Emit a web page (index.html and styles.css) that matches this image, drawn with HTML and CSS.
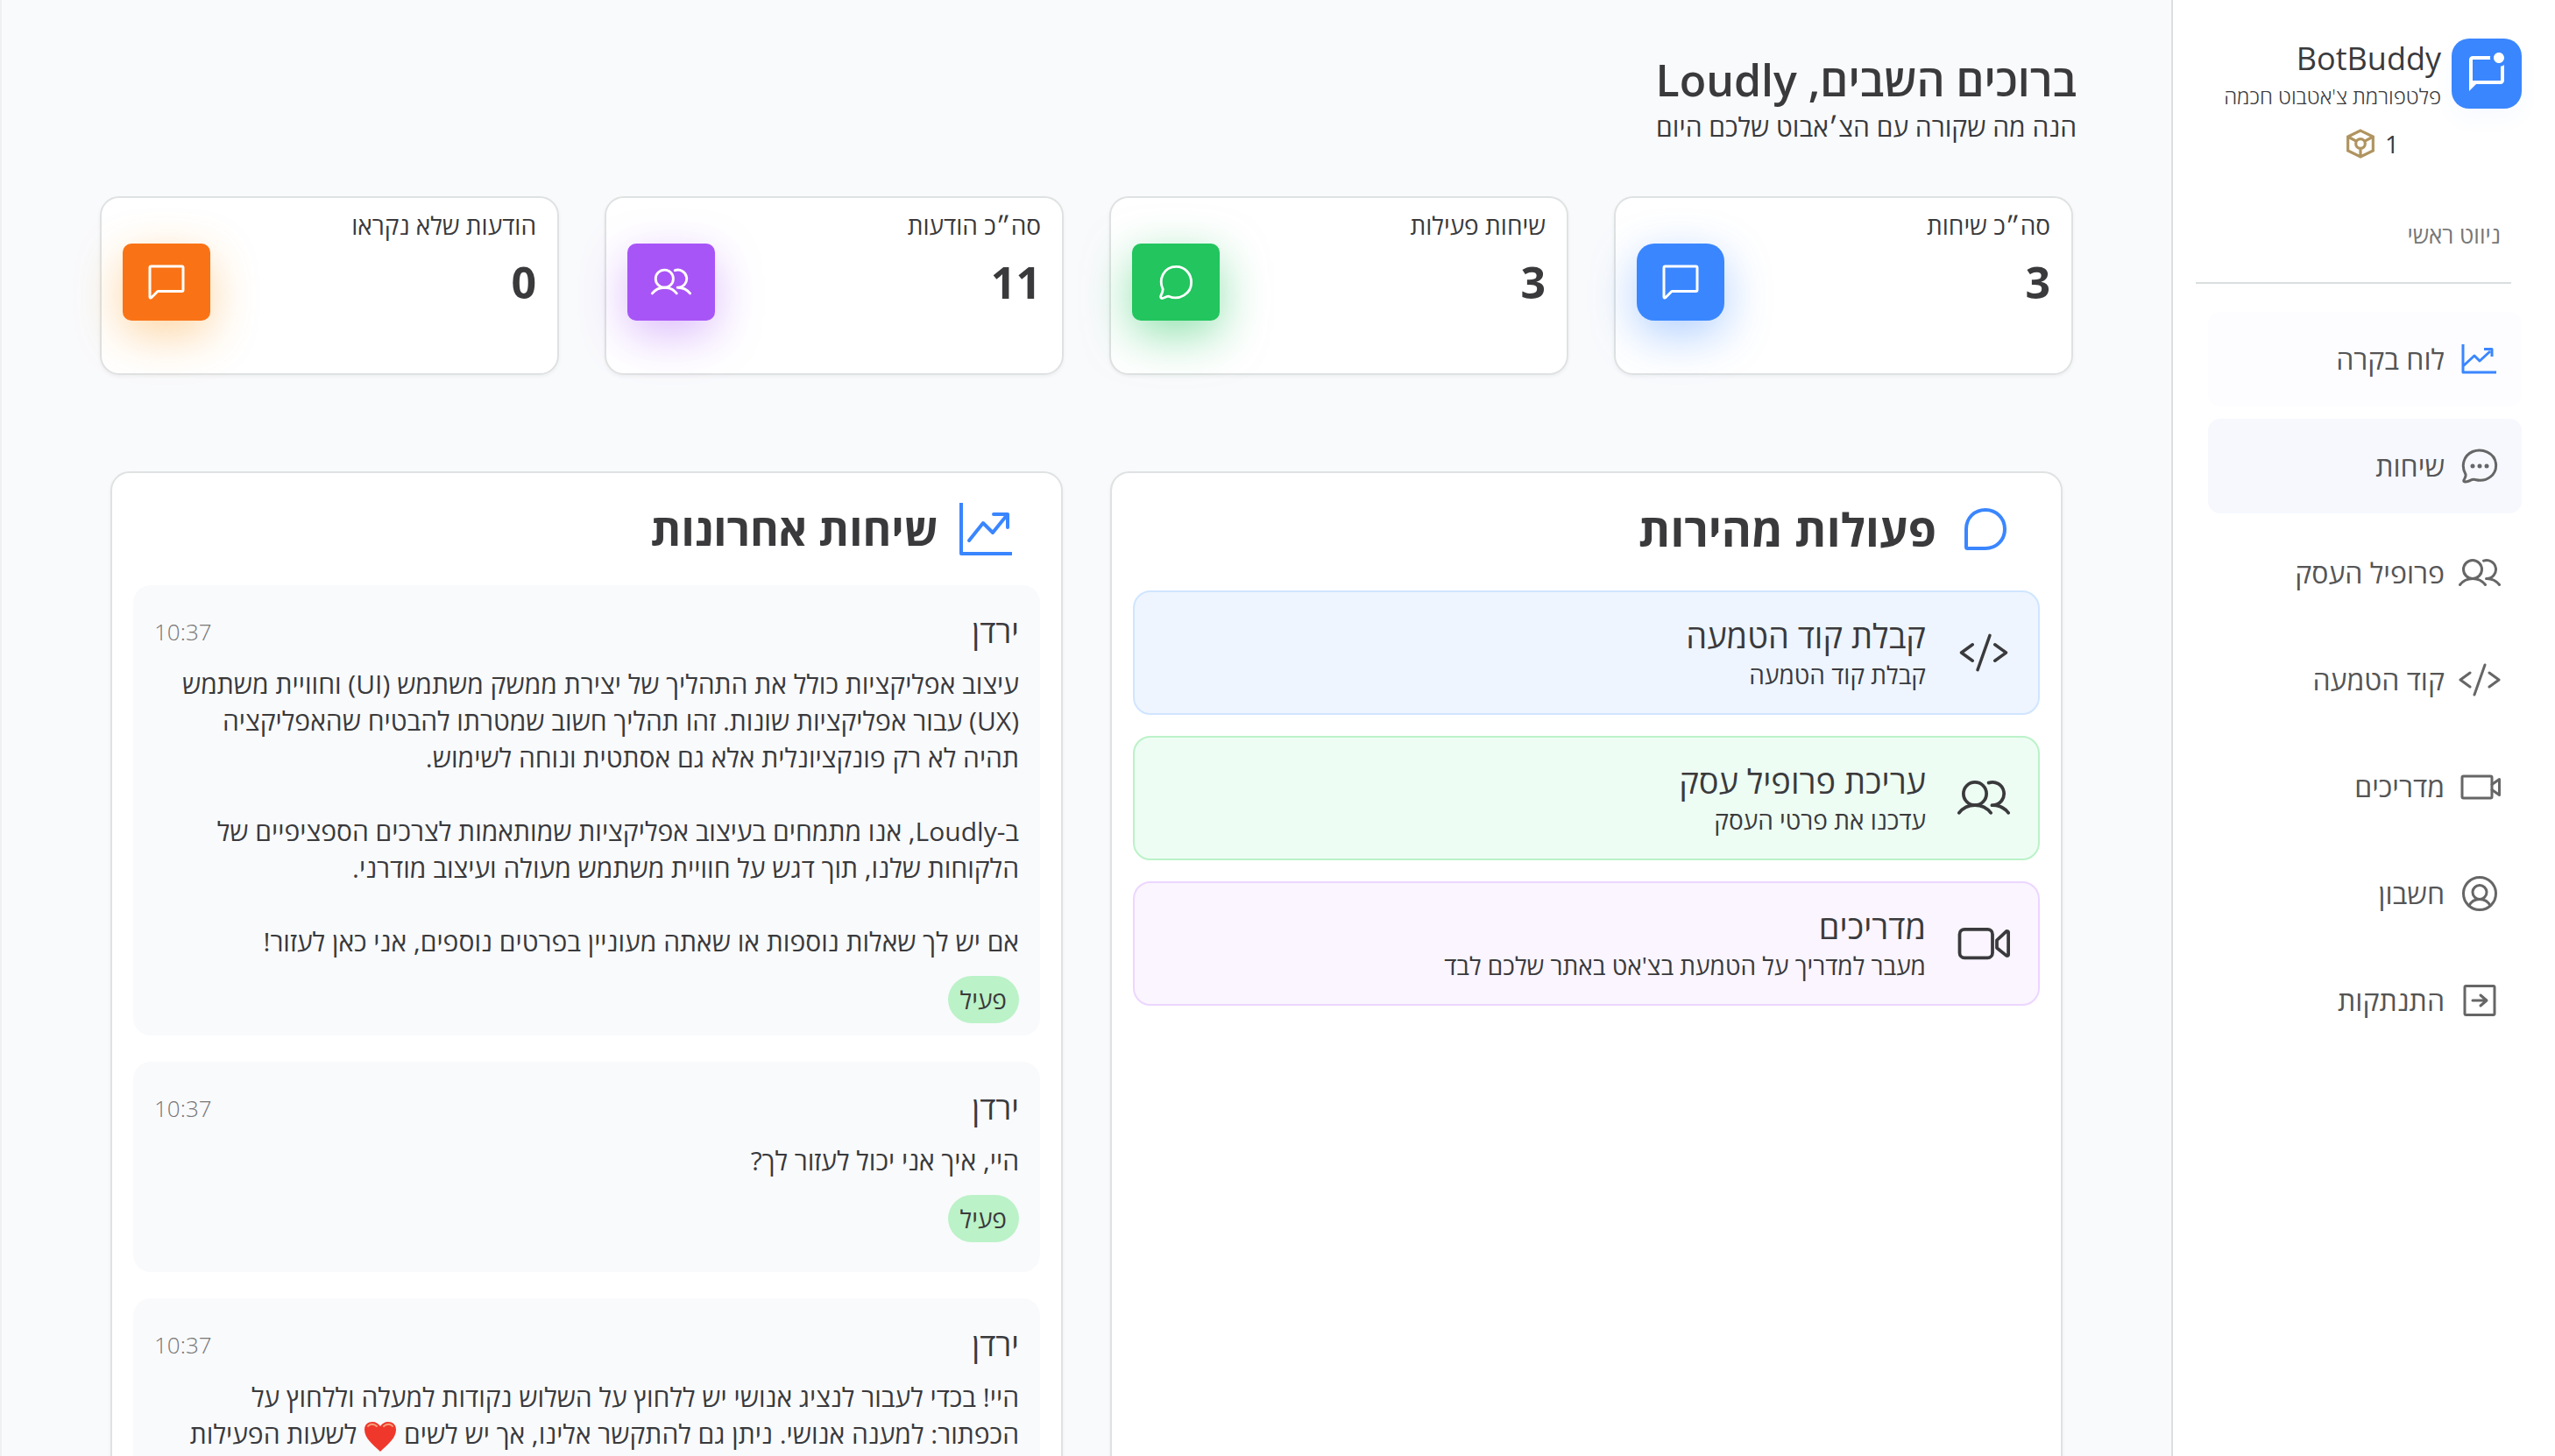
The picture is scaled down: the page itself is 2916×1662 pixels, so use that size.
FILE: index.html
```html
<!DOCTYPE html>
<html lang="he" dir="rtl">
<head>
<meta charset="UTF-8">
<title>BotBuddy</title>
<link rel="stylesheet" href="styles.css">
</head>
<body>

<!-- icons used more than once -->
<svg width="0" height="0" class="sprite">
	<symbol id="users" viewBox="0 0 48 32">
		<circle cx="16" cy="12" r="10.5"/>
		<path d="M1.5 29.5C5 25 10 22.500 16 22.500S27 25 30.500 29.500M28.500 2.100A10.500 10.500 0 1 1 32 22.500H31.500M32 22.500C38 22.500 43 25 46.500 29.500"/>
	</symbol>
	<symbol id="code" viewBox="0 0 48 38">
		<path d="M13 11L2 19l11 8M35 11l11 8-11 8M30 2L18 36"/>
	</symbol>
	<symbol id="chat-square" viewBox="0 0 42 40">
		<path d="M2 37V3.500A1.500 1.500 0 0 1 3.500 2h35A1.500 1.500 0 0 1 40 3.500V29a1.500 1.500 0 0 1-1.500 1.500H11L4 37.500C3 38.500 2 38 2 37Z"/>
	</symbol>
</svg>

<div class="layout">

	<aside class="sidebar">
		<div class="brand">
			<div class="logo">
				<svg viewBox="0 0 24 24"><path fill="#fff" d="M22 6.980V16c0 1.100-.9 2-2 2H6l-4 4V4c0-1.100.9-2 2-2h10.100c-.06.320-.1.660-.1 1s.04.680.1 1H4v12h16V7.900c.74-.15 1.420-.48 2-.92zM16 3c0 1.660 1.340 3 3 3s3-1.340 3-3-1.340-3-3-3-3 1.340-3 3z"/></svg>
			</div>
			<div class="brand-text">
				<span class="brand-name">BotBuddy</span>
				<span class="brand-sub">פלטפורמת צ'אטבוט חכמה</span>
			</div>
		</div>
		<div class="credits">
			<span>1</span>
			<svg viewBox="0 0 30 32"><g fill="none" stroke="#b09460" stroke-width="3"><path d="M15 2L28.500 8.500V23.500L15 30L1.500 23.500V8.500ZM1.500 8.500L10 13M28.500 8.500L20 13M15 22V30"/><circle cx="15" cy="16" r="5"/></g></svg>
		</div>

		<h2 class="nav-title">ניווט ראשי</h2>

		<nav>
			<a href="#" class="nav-item active">
				<svg class="icon" viewBox="0 0 48 40"><path stroke-linecap="butt" d="M5 3V35H43M5 28L18 16l6 6L36 11M29 8.500H38V17"/></svg>
				לוח בקרה
			</a>
			<a href="#" class="nav-item hover">
				<svg class="icon" viewBox="0 0 48 40"><path d="M8 29.500C2.500 20 5.500 8 16 3.500C27 -1 41 5 42.500 17C44 30 32 39 19 35.500C16 34.500 15 35.500 12 37C8 38.500 5 38.500 6 36C7.500 33 8.500 32 8 29.500Z"/><g class="dots"><circle cx="16" cy="20" r="2.500"/><circle cx="24" cy="20" r="2.500"/><circle cx="32" cy="20" r="2.500"/></g></svg>
				שיחות
			</a>
			<a href="#" class="nav-item">
				<svg class="icon"><use href="#users"/></svg>
				פרופיל העסק
			</a>
			<a href="#" class="nav-item">
				<svg class="icon"><use href="#code"/></svg>
				קוד הטמעה
			</a>
			<a href="#" class="nav-item">
				<svg class="icon" viewBox="0 0 48 40"><rect x="4" y="8" width="34" height="25" rx="1.500"/><path d="M38 17.500L46.500 11.500V29.500L38 23.500"/></svg>
				מדריכים
			</a>
			<a href="#" class="nav-item">
				<svg class="icon" viewBox="0 0 48 40"><circle cx="24" cy="20" r="18.500"/><circle cx="24" cy="18.500" r="8"/><path d="M12 34C14 29.500 18.500 26.500 24 26.500S34 29.500 36 34"/></svg>
				חשבון
			</a>
			<a href="#" class="nav-item">
				<svg class="icon" viewBox="0 0 48 40"><rect x="7" y="3.500" width="34" height="33" rx="1.500"/><path d="M16 20H32M25 14L32 20L25 26"/></svg>
				התנתקות
			</a>
		</nav>
	</aside>

	<main class="content">
		<header class="welcome">
			<h1>ברוכים השבים, Loudly</h1>
			<p>הנה מה שקורה עם הצ׳אבוט שלכם היום</p>
		</header>

		<section class="stats">
			<div class="stat">
				<div>
					<p class="stat-label">סה״כ שיחות</p>
					<p class="stat-value">3</p>
				</div>
				<div class="stat-icon blue"><svg class="icon"><use href="#chat-square"/></svg></div>
			</div>
			<div class="stat">
				<div>
					<p class="stat-label">שיחות פעילות</p>
					<p class="stat-value">3</p>
				</div>
				<div class="stat-icon green"><svg class="icon" viewBox="0 0 40 42"><path d="M4.500 29.500C-1 18 5 2.500 20.500 2.500C31 2.500 38.500 11 38.500 21.500C38.500 35 24 43.500 11.500 38C9 38 6 40 3.500 40.500C2 40.500 1.500 39 2 37.500C3.500 34.500 4.500 32 4.500 29.500Z"/></svg></div>
			</div>
			<div class="stat">
				<div>
					<p class="stat-label">סה״כ הודעות</p>
					<p class="stat-value">11</p>
				</div>
				<div class="stat-icon purple"><svg class="icon"><use href="#users"/></svg></div>
			</div>
			<div class="stat">
				<div>
					<p class="stat-label">הודעות שלא נקראו</p>
					<p class="stat-value">0</p>
				</div>
				<div class="stat-icon orange"><svg class="icon"><use href="#chat-square"/></svg></div>
			</div>
		</section>

		<section class="panels">
			<div class="panel">
				<h2 class="panel-title">
					<svg class="icon bubble" viewBox="0 0 48 48"><path d="M2 24C2 11 11.500 2 24 2S46 11.500 46 24S36.500 46 24 46H3.500A1.500 1.500 0 0 1 2 44.500Z"/></svg>
					פעולות מהירות
				</h2>
				<div class="actions">
					<button type="button" class="action blue">
						<svg class="icon"><use href="#code"/></svg>
						<span>
							<span class="action-name">קבלת קוד הטמעה</span>
							<span class="action-sub">קבלת קוד הטמעה</span>
						</span>
					</button>
					<button type="button" class="action green">
						<svg class="icon"><use href="#users"/></svg>
						<span>
							<span class="action-name">עריכת פרופיל עסק</span>
							<span class="action-sub">עדכנו את פרטי העסק</span>
						</span>
					</button>
					<button type="button" class="action purple">
						<svg class="icon" viewBox="0 0 48 32"><rect x="2" y="3" width="30" height="26" rx="4.500"/><path d="M36 13L44 5.500C45 4.500 46.500 4.500 46.500 6V26C46.500 27.500 45 27.500 44 26.500L36 20Z"/></svg>
						<span>
							<span class="action-name">מדריכים</span>
							<span class="action-sub">מעבר למדריך על הטמעת בצ'אט באתר שלכם לבד</span>
						</span>
					</button>
				</div>
			</div>

			<div class="panel">
				<h2 class="panel-title recent">
					<svg class="icon graph" viewBox="0 0 60 60"><path d="M2 0V58H60" stroke-linecap="butt"/><path d="M11 43L27 23L38 34L55 13M39 13H55V28"/></svg>
					שיחות אחרונות
				</h2>
				<div class="messages">
					<article class="message">
						<div class="message-head">
							<h3>ירדן</h3>
							<time>10:37</time>
						</div>
						<p>עיצוב אפליקציות כולל את התהליך של יצירת ממשק משתמש (UI) וחוויית משתמש<br>(UX) עבור אפליקציות שונות. זהו תהליך חשוב שמטרתו להבטיח שהאפליקציה<br>תהיה לא רק פונקציונלית אלא גם אסתטית ונוחה לשימוש.<br><br>ב-Loudly, אנו מתמחים בעיצוב אפליקציות שמותאמות לצרכים הספציפיים של<br>הלקוחות שלנו, תוך דגש על חוויית משתמש מעולה ועיצוב מודרני.<br><br>אם יש לך שאלות נוספות או שאתה מעוניין בפרטים נוספים, אני כאן לעזור!</p>
						<span class="badge">פעיל</span>
					</article>
					<article class="message">
						<div class="message-head">
							<h3>ירדן</h3>
							<time>10:37</time>
						</div>
						<p>היי, איך אני יכול לעזור לך?</p>
						<span class="badge">פעיל</span>
					</article>
					<article class="message">
						<div class="message-head">
							<h3>ירדן</h3>
							<time>10:37</time>
						</div>
						<p>היי! בכדי לעבור לנציג אנושי יש ללחוץ על השלוש נקודות למעלה וללחוץ על<br>הכפתור: למענה אנושי. ניתן גם להתקשר אלינו, אך יש לשים <svg class="heart" viewBox="0 0 38 36"><path fill="#ef382b" d="M19 35C11 27 1 20 1 10C1 4 5 1 10 1C14 1 17 3 19 6C21 3 24 1 28 1C33 1 37 4 37 10C37 20 27 27 19 35Z"/><path fill="none" stroke="#f6a07a" stroke-width="2" stroke-linecap="round" d="M5 6C7 3 12 3 15 6M23 6C26 3 31 3 33 6"/></svg> לשעות הפעילות</p>
					</article>
				</div>
			</div>
		</section>
	</main>

</div>
</body>
</html>
```
FILE: styles.css
```css
* {
	box-sizing: border-box;
	margin: 0;
	padding: 0;
}
body {
	background: #f9fafc;
	color: #3a3a3c;
	font-family: "Open Sans", "Noto Sans", sans-serif;
	font-size: 28px;
	line-height: 42px;
}
.sprite {
	position: absolute;
}
.icon {
	fill: none;
	stroke: currentColor;
	stroke-width: 3;
	stroke-linecap: round;
	stroke-linejoin: round;
	flex: none;
}
.layout {
	display: flex;
	height: 100vh;
	overflow: hidden;
}

/* sidebar */
.sidebar {
	width: 438px;
	flex: none;
	background: #fff;
	border-left: 2px solid #dcdfe0;
	padding: 44px 38px 0 40px;
}
.brand {
	display: flex;
	gap: 12px;
}
.logo {
	width: 80px;
	height: 80px;
	border-radius: 20px;
	background: #3a86ff;
	box-shadow: 0 12px 24px rgba(58, 134, 255, 0.04);
	display: flex;
	align-items: center;
	justify-content: center;
}
.logo svg {
	width: 48px;
	height: 48px;
}
.brand-text {
	display: flex;
	flex-direction: column;
	white-space: nowrap;
}
.brand-name {
	font-size: 36px;
	line-height: 46px;
}
.brand-sub {
	font-size: 24px;
	line-height: 40px;
	font-weight: 300;
}
.credits {
	display: flex;
	align-items: center;
	gap: 12px;
	padding-right: 140px;
	height: 68px;
}
.credits svg {
	width: 32px;
	height: 34px;
}
.nav-title {
	font-size: 26px;
	font-weight: 400;
	color: #777;
	margin: 50px 12px 0 -14px;
	padding: 0 12px 34px;
	line-height: 40px;
	border-bottom: 2px solid #d9dede;
}
nav {
	display: flex;
	flex-direction: column;
	gap: 14px;
	margin-top: 32px;
}
.nav-item {
	height: 108px;
	border-radius: 14px;
	padding: 0 24px;
	display: flex;
	align-items: center;
	gap: 16px;
	font-size: 32px;
	color: #555;
	text-decoration: none;
}
.nav-item .icon {
	width: 48px;
	height: 40px;
	stroke: #666;
}
.nav-item.active {
	background: #fdfdff;
}
.nav-item.active .icon {
	stroke: #3a86ff;
}
.nav-item.hover {
	background: #f6f8fe;
}
.dots {
	fill: #666;
	stroke: none;
}

/* main area */
.content {
	flex: 1;
	min-width: 0;
	border-left: 2px solid #eef0f2;
	padding: 58px 108px 0;
}
.welcome h1 {
	font-size: 50px;
	line-height: 66px;
	font-weight: 600;
}
.welcome p {
	font-size: 30px;
}
.stats {
	display: grid;
	grid-template-columns: repeat(4, 1fr);
	gap: 52px;
	margin: 58px 4px 0;
}
.stat {
	height: 204px;
	background: #fff;
	border: 2px solid #dfe2e2;
	border-radius: 22px;
	padding: 0 24px;
	display: flex;
	justify-content: space-between;
	box-shadow: 0 2px 4px rgba(0, 0, 0, 0.05);
}
.stat-label {
	margin-top: 10px;
}
.stat-value {
	font-size: 50px;
	line-height: 64px;
	font-weight: 700;
	margin-top: 12px;
}
.stat-icon {
	width: 100px;
	height: 88px;
	border-radius: 10px;
	margin-top: 52px;
	color: #fff;
	display: flex;
	align-items: center;
	justify-content: center;
}
.stat-icon .icon {
	width: 46px;
	height: 40px;
}
.stat-icon.blue {
	background: #3a86ff;
	border-radius: 20px;
	box-shadow: 0 16px 52px rgba(58, 134, 255, 0.4);
}
.stat-icon.green {
	background: #22c55e;
	box-shadow: 0 16px 52px rgba(34, 197, 94, 0.5);
}
.stat-icon.purple {
	background: #a855f7;
	box-shadow: 0 16px 52px rgba(168, 85, 247, 0.4);
}
.stat-icon.orange {
	background: #f97316;
	box-shadow: 0 16px 52px rgba(249, 150, 22, 0.4);
}

/* panels */
.panels {
	display: grid;
	grid-template-columns: 1fr 1fr;
	gap: 54px;
	margin: 110px 16px 0;
}
.panel {
	background: #fff;
	border: 2px solid #dfe2e2;
	border-radius: 22px;
	padding: 24px;
	box-shadow: 0 2px 4px rgba(0, 0, 0, 0.05);
}
.panel-title {
	font-size: 52px;
	line-height: 80px;
	font-weight: 700;
	display: flex;
	align-items: center;
	gap: 32px;
	padding-right: 38px;
	margin-bottom: 30px;
}
.panel-title .icon {
	stroke: #3a86ff;
	stroke-width: 4;
}
.bubble {
	width: 48px;
	height: 48px;
}
.graph {
	width: 60px;
	height: 60px;
}
.panel-title.recent {
	font-size: 50px;
	padding-right: 32px;
	gap: 24px;
	margin-bottom: 24px;
}
.actions {
	display: flex;
	flex-direction: column;
	gap: 24px;
}
.action {
	height: 142px;
	border: 2px solid;
	border-radius: 20px;
	padding: 0 32px;
	display: flex;
	align-items: center;
	gap: 36px;
	font: inherit;
	color: inherit;
	text-align: right;
}
.action .icon {
	width: 60px;
	height: 44px;
}
.action.blue {
	background: #eef5ff;
	border-color: #d0e5ff;
}
.action.green {
	background: #edfdf4;
	border-color: #bbf2c8;
}
.action.purple {
	background: #faf5ff;
	border-color: #ecd6ff;
}
.action-name,
.action-sub {
	display: block;
}
.action-name {
	font-size: 38px;
	line-height: 50px;
}
.action-sub {
	line-height: 40px;
}
.messages {
	display: flex;
	flex-direction: column;
	gap: 30px;
}
.message {
	min-height: 240px;
	background: #f9fafc;
	border-radius: 20px;
	padding: 32px 24px 14px;
}
.message-head {
	display: flex;
	justify-content: space-between;
	line-height: 42px;
	margin-bottom: 18px;
}
.message h3 {
	font-size: 36px;
	font-weight: 400;
}
.message time {
	font-size: 26px;
	font-weight: 300;
	color: #777;
}
.message p {
	font-size: 30px;
	white-space: nowrap;
}
.badge {
	display: inline-block;
	margin-top: 18px;
	padding: 0 14px;
	line-height: 54px;
	border-radius: 27px;
	background: #bbf2c8;
}
.heart {
	width: 38px;
	height: 36px;
	vertical-align: middle;
}
```
